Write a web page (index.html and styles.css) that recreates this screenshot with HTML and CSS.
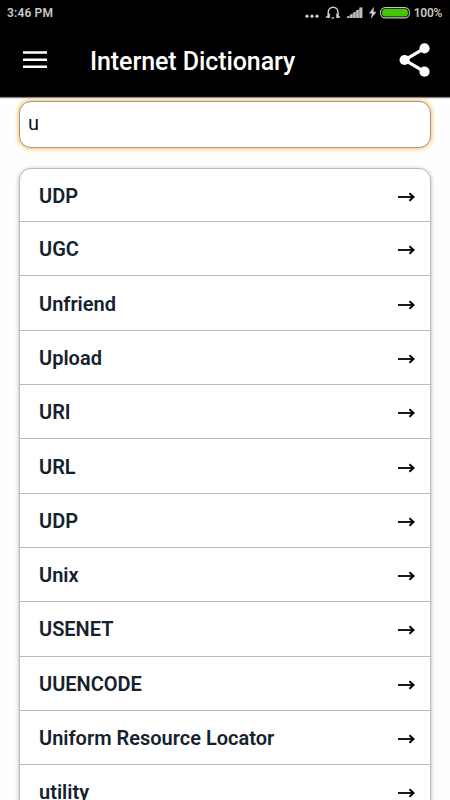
FILE: index.html
```html
<!DOCTYPE html>
<html lang="en">
<head>
<meta charset="utf-8">
<title>Internet Dictionary</title>
<link rel="stylesheet" href="styles.css">
</head>
<body>
<svg class="defs" width="0" height="0"><symbol id="arrow" viewBox="0 0 17 10"><path d="M0 5h15" stroke="#000" stroke-width="1.8"/><path d="M11.4 1.2L15.6 5l-4.2 3.8" fill="none" stroke="#000" stroke-width="1.9"/></symbol></svg>
<header class="top">
  <div class="status">
    <span class="status-text">3:46 PM</span>
    <div class="status-right">
      <svg class="status-icons" width="106" height="16" viewBox="0 0 106 16">
        <g fill="#d0d0d0"><circle cx="2" cy="11.2" r="1.6"/><circle cx="7" cy="11.2" r="1.6"/><circle cx="12" cy="11.2" r="1.6"/></g>
        <path d="M23.2 12V7.5C23.2 .5 33 .5 33 7.5V12" fill="none" stroke="#d0d0d0" stroke-width="1.4"/>
        <path d="M23.9 8.5v4.2M32.3 8.5v4.2" stroke="#d0d0d0" stroke-width="2"/>
        <path d="M21 12h3.4M26.6 13h2.2M31.8 12h3.2" stroke="#d0d0d0" stroke-width="1.4"/>
        <path d="M42 13v-1.7h2.3V13zM45.2 13v-3.8h2.2V13zM48.2 13V7.3h2.2V13zM51.3 13V5h2.2v8zM54.4 13V2.4h2.9V13z" fill="#c8c8c8"/>
        <path d="M41 13L57.3 2V13z" fill="#b8b8b8" opacity=".6"/>
        <path d="M69 1.8L64 8.4h3L65.8 14 71.4 6.7h-3z" fill="#d0d0d0"/>
        <rect x="75.6" y="2.6" width="28.8" height="10.3" rx="4.6" fill="#000" stroke="#c4c4c4" stroke-width="1.1"/>
        <rect x="77.1" y="4" width="25.8" height="7.5" rx="3" fill="#46c800"/>
      </svg>
      <span class="status-text percent">100%</span>
    </div>
  </div>
  <div class="bar">
    <svg class="menu" width="24" height="18" viewBox="0 0 24 18"><path d="M0 1.5h24M0 8.7h24M0 15.7h24" stroke="#fff" stroke-width="2.6"/></svg>
    <h1 class="title">Internet Dictionary</h1>
    <svg class="share" width="32" height="36" viewBox="0 0 32 36"><path d="M25.4 6.3L5.6 18l19.8 11.7" fill="none" stroke="#fff" stroke-width="3.2"/><g fill="#fff"><circle cx="25.5" cy="6.3" r="5.1"/><circle cx="5.6" cy="18" r="5.1"/><circle cx="25.5" cy="29.7" r="5.1"/></g></svg>
  </div>
</header>
<main class="content">
  <input class="search" type="text" value="u" aria-label="Search">
  <ul class="list">
    <li class="row"><span>UDP</span><svg class="arrow"><use href="#arrow"/></svg></li>
    <li class="row"><span>UGC</span><svg class="arrow"><use href="#arrow"/></svg></li>
    <li class="row"><span>Unfriend</span><svg class="arrow"><use href="#arrow"/></svg></li>
    <li class="row"><span>Upload</span><svg class="arrow"><use href="#arrow"/></svg></li>
    <li class="row"><span>URI</span><svg class="arrow"><use href="#arrow"/></svg></li>
    <li class="row"><span>URL</span><svg class="arrow"><use href="#arrow"/></svg></li>
    <li class="row"><span>UDP</span><svg class="arrow"><use href="#arrow"/></svg></li>
    <li class="row"><span>Unix</span><svg class="arrow"><use href="#arrow"/></svg></li>
    <li class="row"><span>USENET</span><svg class="arrow"><use href="#arrow"/></svg></li>
    <li class="row"><span>UUENCODE</span><svg class="arrow"><use href="#arrow"/></svg></li>
    <li class="row"><span>Uniform Resource Locator</span><svg class="arrow"><use href="#arrow"/></svg></li>
    <li class="row"><span>utility</span><svg class="arrow"><use href="#arrow"/></svg></li>
  </ul>
</main>
</body>
</html>
```
FILE: styles.css
```css
* { box-sizing: border-box; }
html, body { margin: 0; height: 100%; }
body {
  display: flex;
  flex-direction: column;
  overflow: hidden;
  background: #fefefe;
  font-family: Roboto, "Liberation Sans", sans-serif;
}
.defs { position: absolute; }
.top {
  flex: none;
  height: 97px;
  background: #000;
  border-bottom: 1px solid #111;
  box-shadow: 0 1px 1px rgba(0, 0, 0, .5);
}
.status {
  display: flex;
  justify-content: space-between;
  height: 25px;
  padding: 0 8px 0 7px;
  color: #c8c8c8;
}
.status-text { font-size: 12px; font-weight: 600; line-height: 26px; letter-spacing: .15px; }
.percent { letter-spacing: -.3px; }
.status-right { display: flex; gap: 2.5px; }
.status-icons { margin-top: 5px; }
.bar {
  display: flex;
  align-items: center;
  height: 70px;
  padding: 0 19px 0 23px;
}
.menu { flex: none; }
.title {
  flex: 1;
  margin: 3px 0 0 43px;
  color: #fff;
  font-size: 25px;
  font-weight: 500;
  line-height: 31px;
  letter-spacing: -.08px;
  white-space: nowrap;
}
.share { flex: none; }
.content {
  flex: 1;
  min-height: 0;
  padding: 4px 19px 0;
  overflow: hidden;
}
.search {
  display: block;
  width: 100%;
  height: 47px;
  padding: 0 8px 3px;
  border: 1px solid #999;
  border-radius: 12px;
  outline: none;
  background: #fff;
  box-shadow: 0 0 4px 1px #ffc45a;
  color: #111;
  font: 400 20px Roboto, "Liberation Sans", sans-serif;
}
.list {
  margin: 20px 0 0;
  padding: 0;
  border: 1px solid #bbb;
  border-radius: 12px;
  background: #fff;
  box-shadow: 0 1px 4px rgba(0, 0, 0, .3);
  list-style: none;
}
.row {
  display: flex;
  align-items: center;
  justify-content: space-between;
  height: 54.3px;
  padding: 1px 15px 0 19px;
  border-bottom: 1px solid #bbb;
  color: #14222d;
  font-size: 20px;
  font-weight: 600;
  line-height: 24px;
}
.row:first-child { height: 53.2px; }
.arrow { width: 17px; height: 10px; margin-top: 2px; }
```
